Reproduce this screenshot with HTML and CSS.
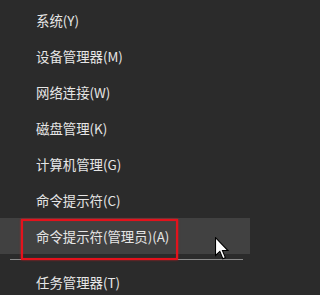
FILE: index.html
```html
<!DOCTYPE html>
<html lang="zh-CN">
<head>
<meta charset="utf-8">
<link rel="stylesheet" href="styles.css">
</head>
<body>
<div class="menu">
  <div class="item">系统(Y)</div>
  <div class="item">设备管理器(M)</div>
  <div class="item">网络连接(W)</div>
  <div class="item">磁盘管理(K)</div>
  <div class="item">计算机管理(G)</div>
  <div class="item">命令提示符(C)</div>
  <div class="item active">命令提示符(管理员)(A)
    <span class="mark"></span>
    <svg class="cursor" width="14" height="24" viewBox="0 0 13 22"><path d="M0.5 0.5 L0.5 17 L4.5 13.2 L7.3 20 L9.6 19 L6.9 12.4 L12 12.4 Z" fill="#fff" stroke="#000" stroke-width="1" stroke-linejoin="miter"/></svg>
  </div>
  <div class="sep"></div>
  <div class="item">任务管理器(T)</div>
</div>
</body>
</html>
```
FILE: styles.css
```css
html, body {
  margin: 0;
  padding: 0;
  background: #2b2b2b;
}
body {
  width: 250px;
  height: 295px;
  overflow: hidden;
  font-family: "Noto Sans CJK SC", "Noto Sans", sans-serif;
  font-size: 13.4px;
  color: #e6e6e6;
}
.menu {
  padding-top: 2px;
  display: flex;
  flex-direction: column;
}
.item {
  position: relative;
  height: 36px;
  line-height: 36px;
  padding-left: 36px;
  white-space: nowrap;
}
.item.active {
  background: #414141;
}
.mark {
  position: absolute;
  left: 21px;
  top: 1px;
  width: 153px;
  height: 37px;
  border: 2px solid #e3121c;
  box-shadow: 0 0 2px rgba(255, 20, 30, 0.7), inset 0 0 1px rgba(255, 20, 30, 0.6);
}
.cursor {
  position: absolute;
  left: 215px;
  top: 19px;
}
.sep {
  height: 1px;
  background: #8a8a8a;
  margin: 5px 7px 4px 10px;
}
```
